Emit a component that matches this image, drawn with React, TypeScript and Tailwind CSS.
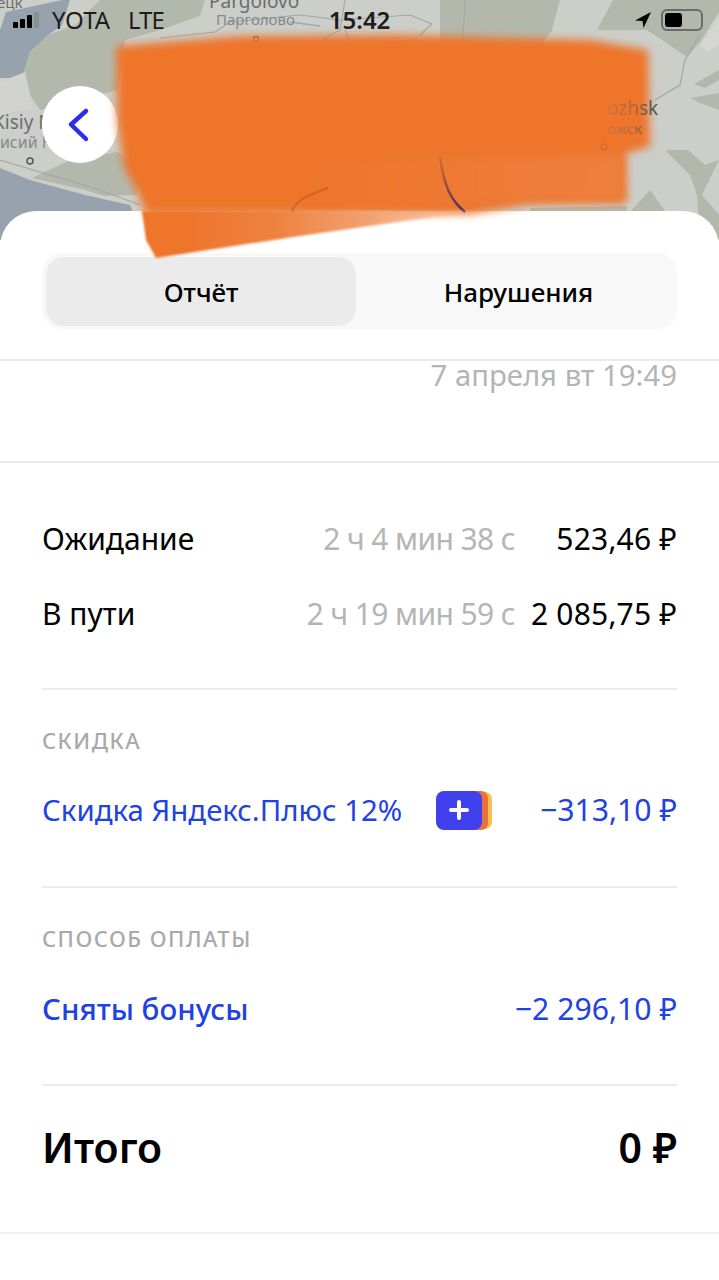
import React from "react";

function MapBg() {
  return (
    <svg className="absolute inset-0 w-full h-full" viewBox="0 0 719 240" preserveAspectRatio="none">
      <rect width="719" height="240" fill="#ccceca" />
      <path d="M6 12 L25 8 L62 0 L70 0 L62 25 L48 35 L30 52 L22 78 L0 78 L0 30Z" fill="#97a2af" />
      <path d="M22 78 L30 52 L48 35 L75 25 L100 0 L205 0 L200 16 L160 30 L125 40 L118 90 L40 110 L30 95Z" fill="#b3b8ad" />
      <path d="M0 82 L25 72 L33 108 L0 115Z" fill="#d2d3ce" />
      <path d="M0 168 L30 180 L85 195 L130 205 L145 240 L0 240Z" fill="#98a2af" />
      <path d="M32 178 L70 160 L118 152 L140 170 L137 195 L105 196 L85 190Z" fill="#b3b8ad" />
      <path d="M440 0 L560 0 L552 30 L530 60 L440 60Z" fill="#b3b8ac" />
      <path d="M597 30 L613 0 L719 0 L719 12 L700 42 L687 57 L647 30Z" fill="#b3b8ac" />
      <path d="M700 45 L719 18 L719 44 L707 52Z" fill="#d5d6d2" />
      <path d="M694 84 L719 70 L719 80 L705 88Z" fill="#b3b8ac" />
      <path d="M690 98 L719 93 L719 110 L700 103Z" fill="#b3b8ac" />
      <path d="M665 150 L688 150 L705 165 L719 160 L702 195 L719 215 L719 240 L700 240 L697 195 L690 175Z" fill="#b3b8ac" />
      <path d="M630 212 L650 190 L668 215 L668 240 L630 240Z" fill="#b3b8ac" />
      <path d="M530 208 L627 206 L627 240 L530 240Z" fill="#b3b8ac" />
      <g fill="none" stroke="#a4a7a6" strokeWidth="1.2">
        <path d="M0 160 L40 172 L100 190 L140 205" />
        <path d="M160 38 L215 32 L230 22 L300 15 L340 20 L410 15 L432 24 L420 35" />
        <path d="M345 0 L340 30 L325 38 L300 70 M345 30 L360 65" />
        <path d="M465 0 L462 60" />
        <path d="M655 100 L680 85 L685 60 L700 35" />
      </g>
      <path d="M290 22 L320 26" stroke="#a2a8bc" strokeWidth="1.5" fill="none" />
      <g fontFamily="Noto Sans, sans-serif" fill="#6a6e70">
        <text x="-3" y="8" fontSize="15">ецк</text>
        <text x="209" y="8" fontSize="19">Pargolovo</text>
        <text x="216" y="25" fontSize="15" fill="#85888a">Парголово</text>
        <text x="-7" y="129" fontSize="19">Kisiy N</text>
        <text x="-8" y="148" fontSize="16" fill="#85888a">сисий Н</text>
      </g>
      <g fill="none" stroke="#56595a" strokeWidth="1.5">
        <circle cx="256" cy="39" r="2.5" />
        <circle cx="30" cy="161" r="3" />
      </g>
    </svg>
  );
}

function Scribble() {
  return (
    <svg className="absolute left-0 top-0 w-[719px] h-[270px] z-20 pointer-events-none" viewBox="0 0 719 270">
      <defs>
        <filter id="soft" x="-5%" y="-10%" width="110%" height="120%">
          <feGaussianBlur stdDeviation="4" />
        </filter>
        <filter id="soft2" x="-10%" y="-20%" width="120%" height="140%">
          <feGaussianBlur stdDeviation="1.2" />
        </filter>
        <linearGradient id="wedge" gradientUnits="userSpaceOnUse" x1="190" y1="225" x2="475" y2="225">
          <stop offset="0" stopColor="#ee752c" />
          <stop offset="0.3" stopColor="#ef8240" />
          <stop offset="0.65" stopColor="#f2a473" />
          <stop offset="1" stopColor="#f6c09c" stopOpacity="0.5" />
        </linearGradient>
        <linearGradient id="patch" gradientUnits="userSpaceOnUse" x1="300" y1="180" x2="627" y2="180">
          <stop offset="0" stopColor="#ee7f3d" stopOpacity="0" />
          <stop offset="1" stopColor="#ee7f3d" stopOpacity="1" />
        </linearGradient>
        <linearGradient id="river" gradientUnits="userSpaceOnUse" x1="440" y1="157" x2="465" y2="212">
          <stop offset="0" stopColor="#b3562c" stopOpacity="0.4" />
          <stop offset="0.6" stopColor="#7a4650" />
          <stop offset="1" stopColor="#43355e" />
        </linearGradient>
        <linearGradient id="label" gradientUnits="userSpaceOnUse" x1="607" y1="0" x2="650" y2="0">
          <stop offset="0" stopColor="#d9703a" />
          <stop offset="0.6" stopColor="#b06a45" />
          <stop offset="1" stopColor="#55585a" />
        </linearGradient>
      </defs>
      <path
        filter="url(#soft)"
        fill="#ee752c"
        d="M116 46 L240 36 L400 35 L590 40 L648 50 L650 147 L626 153 L627 203 L530 204 L470 214 L146 214 L137 192 L124 168 L117 120Z"
      />
      <path d="M300 160 L622 155 L622 200 L530 201 L300 210Z" fill="url(#patch)" filter="url(#soft)" />
      <path d="M440 157 C444 185 450 200 465 212" stroke="url(#river)" strokeWidth="2.5" fill="none" />
      <path d="M292 212 C294 202 305 196 328 188" stroke="#c9652e" strokeWidth="2" fill="none" />
      <g fontFamily="Noto Sans, sans-serif" fill="url(#label)">
        <text x="607" y="115" fontSize="19">ozhsk</text>
        <text x="607" y="134" fontSize="15">ожск</text>
      </g>
      <circle cx="604" cy="147" r="3" fill="none" stroke="#d56c33" strokeWidth="1.5" />
      <path filter="url(#soft2)" fill="url(#wedge)" d="M142 211 L475 211 L300 236 L156 258 L146 240Z" />
    </svg>
  );
}

function Row({ label, time, sum }: { label: string; time: string; sum: string }) {
  return (
    <div className="flex items-center h-[75px] text-[30px] text-black">
      <span>{label}</span>
      <span className="ml-auto tracking-[-0.6px] text-[#b5b5b5]">{time}</span>
      <span className="w-[162px] text-right tracking-[0.2px]">{sum}</span>
    </div>
  );
}

export default function App() {
  return (
    <div
      className="relative w-[719px] h-[1280px] overflow-hidden bg-white"
      style={{ fontFamily: '"Noto Sans", sans-serif' }}
    >
      <div className="relative h-[240px] -mb-[29px]">
        <MapBg />
        <div className="relative flex items-center h-[40px] pl-[13px] pr-[14px] text-[24px] text-[#1c1c1c]">
          <div className="flex items-end gap-[2px] h-[16px] w-[27px]">
            <i className="w-[5px] h-[6px] bg-black rounded-[1px]" />
            <i className="w-[5px] h-[9px] bg-black rounded-[1px]" />
            <i className="w-[5px] h-[13px] bg-black rounded-[1px]" />
            <i className="w-[5px] h-[16px] bg-[#8d8f8d] rounded-[1px]" />
          </div>
          <span className="ml-[12px] w-[76px]">YOTA</span>
          <span className="tracking-[-1px]">LTE</span>
          <span className="ml-[165px] font-semibold">15:42</span>
          <svg className="ml-auto mr-[9px]" width="18" height="18" viewBox="0 0 18 18">
            <path d="M17 1 L1 9.5 L8.5 10 L9.5 17Z" fill="#000" />
          </svg>
          <div className="flex items-center w-[42px] h-[22px] border-2 border-[#6a6c6a] rounded-[6px] p-[2px] mr-[2px]">
            <i className="w-[17px] h-full bg-black rounded-[3px]" />
          </div>
        </div>
        <button className="relative ml-[42px] mt-[46px] flex items-center justify-center w-[76px] h-[77px] rounded-full bg-white">
          <svg className="-ml-[2px]" width="24" height="36" viewBox="0 0 24 36" fill="none" stroke="#2e2ee8" strokeWidth="4.5" strokeLinecap="round" strokeLinejoin="round">
            <path d="M19 4 L4 17.5 L19 32" />
          </svg>
        </button>
      </div>

      <div className="relative z-10 bg-white rounded-t-[36px]">
        <div className="pt-[42px] px-[42px]">
          <div className="flex h-[76px] bg-[#f8f8f8] rounded-[20px] p-[4px] text-[26px] font-medium text-black">
            <div className="flex items-center justify-center w-[310px] pt-[2px] bg-[#ebebeb] rounded-[18px] -mb-[1px]">Отчёт</div>
            <div className="flex-1 flex items-center justify-center pt-[2px] pl-[8px]">Нарушения</div>
          </div>
        </div>
        <div className="mt-[30px] h-[104px] border-t-2 border-b-2 border-[#ebebeb] px-[42px] text-right text-[29.3px] leading-[28px] text-[#b5b5b5]">
          7 апреля вт 19:49
        </div>
        <div className="px-[42px]">
          <div className="pt-[38px] pb-[37px] border-b-2 border-[#ebebeb]">
            <Row label="Ожидание" time="2 ч 4 мин 38 с" sum="523,46 ₽" />
            <Row label="В пути" time="2 ч 19 мин 59 с" sum="2 085,75 ₽" />
          </div>
          <div className="h-[198px] border-b-2 border-[#ebebeb]">
            <div className="pt-[36px] text-[22px] leading-[28px] font-medium tracking-[1.5px] text-[#a9a9a9]">СКИДКА</div>
            <div className="flex items-center mt-[34px] h-[44px] text-[29.4px] text-[#1f42e2]">
              <span>Скидка Яндекс.Плюс 12%</span>
              <div className="relative ml-[34px] w-[56px] h-[39px]">
                <i className="absolute right-0 top-[1px] w-[20px] h-[37px] bg-[#f5c04f] rounded-[7px]" />
                <i className="absolute right-[4px] top-0 w-[20px] h-[39px] bg-[#e8703a] rounded-[7px]" />
                <div className="absolute left-0 top-0 flex items-center justify-center w-[46px] h-[39px] bg-[#4040ec] rounded-[8px]">
                  <svg width="20" height="20" viewBox="0 0 20 20" stroke="#fff" strokeWidth="4" strokeLinecap="round">
                    <path d="M10 2 V18 M2 10 H18" />
                  </svg>
                </div>
              </div>
              <span className="ml-auto text-[30.2px]">−313,10 ₽</span>
            </div>
          </div>
          <div className="h-[198px] border-b-2 border-[#ebebeb]">
            <div className="pt-[36px] text-[22px] leading-[28px] font-medium tracking-[1.5px] text-[#a9a9a9]">СПОСОБ ОПЛАТЫ</div>
            <div className="flex items-center mt-[35px] h-[44px] text-[29.5px] text-[#1f42e2]">
              <span className="font-medium">Сняты бонусы</span>
              <span className="ml-auto text-[30.2px]">−2 296,10 ₽</span>
            </div>
          </div>
          <div className="flex items-center justify-between h-[146px] pb-[22px] text-[41px] font-semibold text-black">
            <span>Итого</span>
            <span>0 ₽</span>
          </div>
        </div>
        <div className="border-t-2 border-[#efefef] h-[60px]" />
      </div>
      <Scribble />
    </div>
  );
}
